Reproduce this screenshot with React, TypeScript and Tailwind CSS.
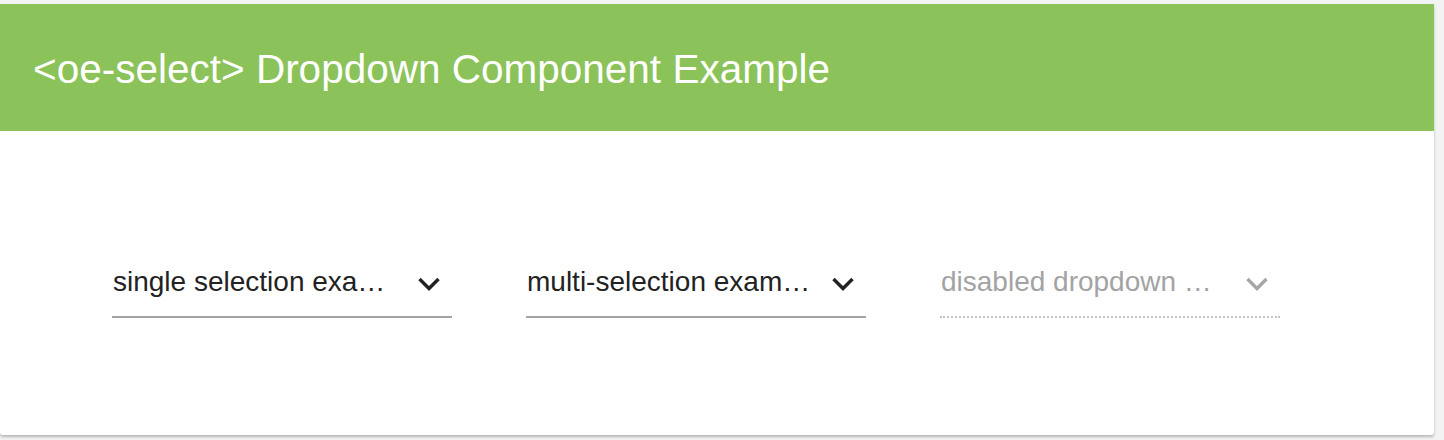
import React from "react";

type DropdownProps = {
  label: string;
  disabled?: boolean;
};

function Chevron({ disabled }: { disabled?: boolean }) {
  return (
    <svg width="24" height="16" viewBox="0 0 24 16" className="shrink-0 mt-[3px]">
      <polyline
        points="2.5,3 12,12.5 21.5,3"
        fill="none"
        stroke={disabled ? "#a6a6a6" : "#222222"}
        strokeWidth="3.4"
      />
    </svg>
  );
}

function Dropdown({ label, disabled }: DropdownProps) {
  return (
    <div
      className={
        "w-[340px] flex items-center justify-between pl-px pr-[11px] pt-[2px] pb-[18px] " +
        (disabled
          ? "border-b-2 border-dotted border-[#c4c4c4] text-[#a3a3a3]"
          : "border-b-2 border-[#a3a3a3] text-[#222222]")
      }
    >
      <span className="text-[28px] leading-[32px] truncate">{label}</span>
      <Chevron disabled={disabled} />
    </div>
  );
}

export default function App() {
  return (
    <div className="min-h-[440px] bg-[#f3f3f3] pt-[4px] font-['Liberation_Sans',Arial,sans-serif]">
      <div className="w-[1434px] h-[431px] bg-white rounded-b-[3px] shadow-[0_2px_3px_rgba(0,0,0,0.25)] overflow-hidden">
        <div className="h-[127px] bg-[#8bc35a] flex items-center pl-[33px] pt-[4px]">
          <h1 className="text-white text-[40.5px] leading-none">
            &lt;oe-select&gt; Dropdown Component Example
          </h1>
        </div>
        <div className="pt-[133px] pl-[112px] flex gap-[74px]">
          <Dropdown label="single selection exa…" />
          <Dropdown label="multi-selection exam…" />
          <Dropdown label="disabled dropdown …" disabled />
        </div>
      </div>
    </div>
  );
}
